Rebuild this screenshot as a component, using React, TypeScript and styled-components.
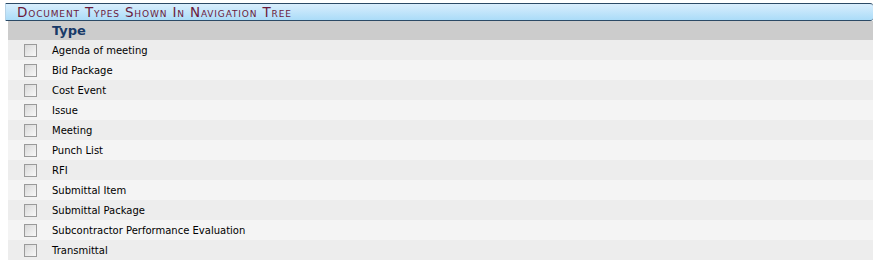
import React from 'react'
import styled, { createGlobalStyle } from 'styled-components'

const GlobalStyle = createGlobalStyle`
  body {
    margin: 0;
    background: #ffffff;
    font-family: "DejaVu Sans", Verdana, sans-serif;
  }
`

const Page = styled.div`
  padding: 3px 8px 0 5px;
`

const TitleBar = styled.div`
  height: 16px;
  border-top: 1px solid #2b4a66;
  border-bottom: 1px solid #2b4a66;
  border-left: 1px solid #b6d2e6;
  background: linear-gradient(#d9eefd, #abdcf8);
  display: flex;
  align-items: center;
  padding-left: 11px;
  border-radius: 0 3px 3px 0;
`

const TitleText = styled.span`
  font-variant: small-caps;
  font-size: 13.5px;
  color: #6a1a3c;
  letter-spacing: 0.85px;
`

const Table = styled.div`
  margin-left: 3px;
`

const HeadRow = styled.div`
  height: 19px;
  background: #cccccc;
  display: flex;
  align-items: center;
  padding-left: 44px;
`

const HeadText = styled.span`
  font-size: 13px;
  font-weight: bold;
  color: #183a68;
`

const Row = styled.div<{ $odd: boolean }>`
  height: 20px;
  display: flex;
  align-items: center;
  background: ${(p) => (p.$odd ? '#ededed' : '#f4f4f4')};
`

const Check = styled.input`
  appearance: none;
  margin: 0 15px 0 16px;
  width: 13px;
  height: 13px;
  border: 1px solid #9a9a9a;
  background: linear-gradient(135deg, #d8d8d8, #f8f8f8);
  box-sizing: border-box;
`

const Label = styled.span`
  font-size: 10px;
  color: #000000;
  padding-top: 1px;
`

const types = [
  'Agenda of meeting',
  'Bid Package',
  'Cost Event',
  'Issue',
  'Meeting',
  'Punch List',
  'RFI',
  'Submittal Item',
  'Submittal Package',
  'Subcontractor Performance Evaluation',
  'Transmittal',
]

const App: React.FC = () => {
  return (
    <Page>
      <GlobalStyle />
      <TitleBar>
        <TitleText>Document Types Shown In Navigation Tree</TitleText>
      </TitleBar>
      <Table>
        <HeadRow>
          <HeadText>Type</HeadText>
        </HeadRow>
        {types.map((t, i) => (
          <Row key={t} $odd={i % 2 === 0}>
            <Check type="checkbox" />
            <Label>{t}</Label>
          </Row>
        ))}
      </Table>
    </Page>
  )
}

export default App
